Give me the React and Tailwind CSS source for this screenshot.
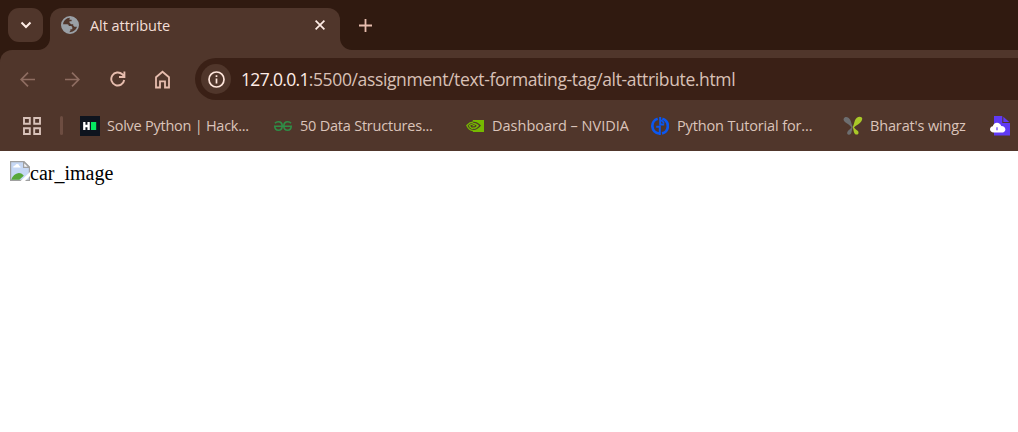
const ui = "font-['Open_Sans','Noto_Sans',sans-serif]";

function Corner({ flip }) {
  return (
    <svg className={flip ? "block -scale-x-100" : "block"} width="12" height="12" viewBox="0 0 12 12">
      <path d="M12 0V12H0C6.6 12 12 6.6 12 0Z" fill="#50362b" />
    </svg>
  );
}

function Globe() {
  return (
    <svg className="block shrink-0" width="18" height="18" viewBox="0 0 18 18">
      <circle cx="9" cy="9" r="8.1" fill="#50362b" stroke="#9aa0a6" strokeWidth="1.8" />
      <path d="M9 1h3.6l3.6 3.8 1 4.2-1.2 1.7h-2.6l-1.2-1.2V8.3h-2L8.500 6.800V5.200h2.100V3.800H8.400zM1 8.200h5.200c1.300 0 1.600.8 1.600 1.900h2.100c1 0 1.400.8 1.400 1.700v1.400H9.400v1.500l-1.600 2.100C3.900 16.200 1 13 1 8.200z" fill="#9aa0a6" />
    </svg>
  );
}

function HackerRank() {
  return (
    <svg className="block" width="20" height="20" viewBox="0 0 20 20">
      <path d="M0 0h20v20H0z" fill="#0e141e" />
      <path d="M4.300 6v8M8.600 6v8M4.600 10h4" stroke="#fff" strokeWidth="2.300" fill="none" />
      <path d="M11 6h5.200v8H11z" fill="#05e661" />
    </svg>
  );
}

function Geeks() {
  return (
    <svg className="block" width="18" height="18" viewBox="0 0 18 18" fill="none" stroke="#2f8d46" strokeWidth="1.6">
      <path d="M1 6.200C2 5 3.100 4.700 4.200 4.700c2.500 0 4 1.900 4 4.300s-1.600 4.200-3.800 4.200S.8 11.500.8 9.300H17.200c0 2.200-1.400 3.900-3.600 3.900S9.800 11.400 9.800 9s1.500-4.300 4-4.300c1.100 0 2.200.3 3.200 1.500" />
    </svg>
  );
}

function Nvidia() {
  return (
    <svg className="block" width="18" height="12" viewBox="0 0 18 12">
      <path d="M6.800 0H18v12H6.800z" fill="#76b900" />
      <path d="M6.800 1.800C11.500 1.200 15 5.600 15 5.600S11.500 10 8 10L6.800 9.800z" fill="#50362b" />
      <path d="M6.800 2.800C10.500 2.400 13 5.700 13 5.700S10.700 8.900 8 8.900L6.800 8.600z" fill="#76b900" />
      <path d="M6.800 4.200C9 4 10.700 5.800 10.700 5.800S9.500 7.700 7.900 7.600L6.800 7.200z" fill="#50362b" />
      <path d="M7 2.200C4 2.200.8 5.500.8 5.500S3 10.300 7 10.500M7 4C5 4 3.400 5.700 3.400 5.700S4.700 8.500 7 8.500M6.800 5.700h2" fill="none" stroke="#76b900" strokeWidth="1.200" />
    </svg>
  );
}

function PythonGuides() {
  return (
    <svg className="block" width="18" height="18" viewBox="0 0 18 18" fill="none" stroke="#0b57f0">
      <path d="M6.700 1.700A7.600 7.600 0 0 0 8 16.500M11.300 1.700a7.600 7.600 0 0 1-.3 14.700" strokeWidth="2.700" />
      <path d="M5.200 9.800h3.600V18M9.200 0v7.500h4" strokeWidth="2" />
      <path d="M9.200 3.200c2 .2 3.200 1.500 3.700 3.300" strokeWidth="1.600" />
    </svg>
  );
}

function Wings() {
  return (
    <svg className="block" width="20" height="20" viewBox="0 0 20 20">
      <path d="M.8 2.500C2-.2 5.800.8 7.200 3.800c1.100 2.300 1.500 5 2.500 7.200-.2 1.600-.8 2.700-1 4.200-.3 2.200-1.300 3.700-3 3.500-1.500-.2-2.100-2-.9-3.500 1-1.300 2.600-2 3.600-3.700C6.800 8.900 4.600 8.300 2.600 6.600 1 5.400.1 4 .8 2.500z" fill="#6d6e70" />
      <path d="M18.800 1.500C16.600-.2 13 1.300 11.900 4.500c-.8 2.300-1.200 4.600-2.200 6.600.5 1.300.7 2.700 1 4.100.5 2.300 1.700 3.600 3.200 3.400 1.600-.2 2.200-2.200 1-3.600-1.100-1.200-2.800-1.800-3.900-3.500 1.500-2 3.900-2.900 5.900-4.600 1.800-1.600 3-4.100 1.900-5.400z" fill="#a9c928" />
    </svg>
  );
}

function CloudFile() {
  return (
    <svg className="block" width="20" height="20" viewBox="0 0 20 20">
      <path d="M4 0h8.300v7H20v12.500H4z" fill="#5f3af5" />
      <path d="M13.300.8v5.200h6z" fill="#5f3af5" />
      <path d="M3.700 16.500C1.500 16.500 0 15.300 0 13.300c0-1.600 1.200-2.700 2.800-3C3.200 8.200 4.800 6.700 7 6.700c2 0 3.700 1.300 4.300 3.200 2.500.1 4.100 1.600 4.100 3.500 0 2-1.700 3.100-3.800 3.100z" fill="#fff" />
      <path d="M7 11.200v3" stroke="#5f3af5" strokeWidth="1.200" />
    </svg>
  );
}

function BrokenImage() {
  return (
    <svg className="block shrink-0" width="20" height="20" viewBox="0 0 20 20">
      <path d="M.6.600H14l5.400 5.400v13.400H.6z" fill="#c6d8f5" stroke="#a0a0a0" strokeWidth="1.200" />
      <path d="M3.200 6.500c0-1.200 1-1.900 2-1.900.4-1 1.200-1.500 2-1.500 1.300 0 2 1 2.100 1.900.9.100 1.300.8 1.300 1.500z" fill="#fff" />
      <path d="M1.200 18.800c1.500-4 4-6.300 7.600-6.700 2.200 0 4 1.400 5 2.700l-4.500 4z" fill="#57a83a" />
      <path d="M20 11v4l-5 5h-4.500z" fill="#fff" />
      <path d="M13.600.8v5.600h5.600z" fill="#f4f6fa" stroke="#a0a0a0" strokeWidth="1.200" />
    </svg>
  );
}

function Bookmark({ icon, label, box, text }) {
  return (
    <div className={"flex h-full shrink-0 items-center " + box}>
      {icon}
      <span className={"shrink-0 whitespace-nowrap text-[14.5px] leading-5 " + text}>{label}</span>
    </div>
  );
}

export default function App() {
  return (
    <div className="flex h-[432px] w-[1018px] flex-col overflow-hidden bg-white">
      <header className={"flex flex-col bg-[#301a10] " + ui}>
        <div className="flex h-[50px] pt-2">
          <button className="ml-2 flex h-[34px] w-[35px] items-center justify-center rounded-[11px] bg-[#50362b]">
            <svg width="12" height="8" viewBox="0 0 12 8" fill="none" stroke="#ffede6" strokeWidth="2">
              <path d="M1.500 1.500 6 6l4.500-4.500" />
            </svg>
          </button>
          <div className="-ml-[5px] flex items-end"><Corner /></div>
          <div className="flex h-[42px] w-[290px] items-center rounded-t-[12px] bg-[#50362b] pb-[8px] pl-[11px] pr-[15px]">
            <Globe />
            <span className="ml-[11px] mt-px whitespace-nowrap text-[14.5px] leading-5 tracking-[-0.05px] text-[#f3dfd7]">Alt attribute</span>
            <svg className="ml-auto" width="10" height="10" viewBox="0 0 10 10" stroke="#ffede6" strokeWidth="1.700">
              <path d="M.6.600l8.800 8.800M9.400.600.6 9.400" />
            </svg>
          </div>
          <div className="flex items-end"><Corner flip /></div>
          <svg className="ml-[6px] mt-[10px]" width="15" height="15" viewBox="0 0 15 15" stroke="#e7bdae" strokeWidth="1.800">
            <path d="M7.500 1v13M1 7.500h13" />
          </svg>
        </div>
        <div className="h-[101px] rounded-tl-[12px] bg-[#50362b]">
          <div className="flex h-[58px] items-center">
            <svg className="ml-5" width="15" height="15" viewBox="0 0 15 15" fill="none" stroke="#8e6d61" strokeWidth="1.700">
              <path d="M15 7.500H1.500M8 .7 1.200 7.500 8 14.300" />
            </svg>
            <svg className="ml-[30px]" width="15" height="15" viewBox="0 0 15 15" fill="none" stroke="#8e6d61" strokeWidth="1.700">
              <path d="M0 7.500h13.500M7 .7l6.800 6.800L7 14.300" />
            </svg>
            <svg className="ml-[30px]" width="16" height="16" viewBox="0 0 16 16" fill="none" stroke="#e7bdae" strokeWidth="1.900">
              <path d="M14.200 9A6.500 6.500 0 1 1 12.300 3.300l2 2M14.400.500v5.500H9" />
            </svg>
            <svg className="ml-[28px]" width="17" height="19" viewBox="0 0 17 19" fill="none" stroke="#e7bdae" strokeWidth="1.800">
              <path d="M2 17.500V7.200l6.500-5.500L15 7.200v10.300h-4v-6.200H6v6.200z" />
            </svg>
            <div className="ml-[24px] flex h-[42px] flex-1 items-center rounded-l-full bg-[#3a2016]">
              <span className="ml-1.5 flex size-[30px] shrink-0 items-center justify-center rounded-full bg-[#50362b]">
                <svg width="17" height="17" viewBox="0 0 17 17" fill="none" stroke="#ffe6dc" strokeWidth="1.700">
                  <circle cx="8.500" cy="8.500" r="7.500" />
                  <path d="M8.500 7.500v5M8.500 4.300v1.800" />
                </svg>
              </span>
              <span className="ml-2.5 whitespace-nowrap text-[17.5px] leading-6 tracking-[-0.36px] text-[#d9c0b6]">
                <span className="tracking-[-0.68px] text-[#ffede6]">127.0.0.1</span>:5500/assignment/text-formating-tag/alt-attribute.html
              </span>
            </div>
          </div>
          <div className="flex h-[43px] items-center overflow-hidden pb-[8px] text-[#dbc4ba]">
            <svg className="ml-[23px] shrink-0" width="18" height="18" viewBox="0 0 18 18" fill="none" stroke="#d8c2b9" strokeWidth="1.900">
              <path d="M1 1h5.800v5.800H1zM11.200 1H17v5.800h-5.800zM1 11.200h5.800V17H1zM11.200 11.200H17V17h-5.800z" />
            </svg>
            <span className="ml-[19px] h-[19px] w-[3px] shrink-0 rounded-full bg-[#6d4d41]" />
            <Bookmark box="ml-[17px] w-[193px]" text="ml-[7px] tracking-[-0.25px]" icon={<HackerRank />} label="Solve Python | Hack..." />
            <Bookmark box="ml-[1px] w-[192px]" text="ml-[8px] tracking-[-0.22px]" icon={<Geeks />} label="50 Data Structures..." />
            <Bookmark box="w-[185px]" text="ml-[8px] tracking-[0px]" icon={<Nvidia />} label="Dashboard – NVIDIA" />
            <Bookmark box="w-[192px]" text="ml-[8px] tracking-[-0.13px]" icon={<PythonGuides />} label="Python Tutorial for..." />
            <Bookmark box="w-[147px]" text="ml-[7px] tracking-[-0.15px]" icon={<Wings />} label="Bharat's wingz" />
            <CloudFile />
          </div>
        </div>
      </header>
      <main className="flex items-start pl-[10px] pt-[10px]">
        <BrokenImage />
        <span className="mt-px font-['Liberation_Serif',serif] text-[20px] leading-[23px] text-black">car_image</span>
      </main>
    </div>
  );
}
